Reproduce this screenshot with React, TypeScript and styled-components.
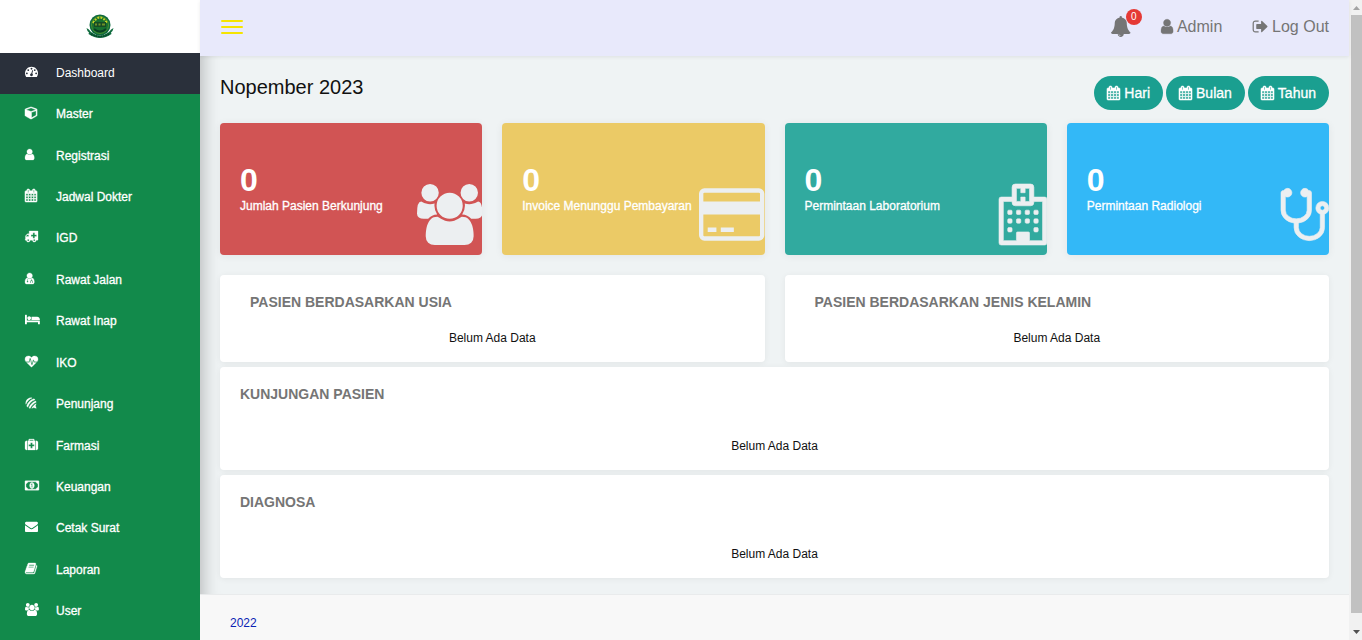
import React from "react";
import styled, { createGlobalStyle } from "styled-components";
import { FaForumbee } from "react-icons/fa";

const GlobalStyle = createGlobalStyle`
  * { box-sizing: border-box; }
  html, body { margin: 0; padding: 0; }
  body {
    font-family: "Liberation Sans", Arial, sans-serif;
    font-size: 12px;
    color: #111;
    overflow: hidden;
  }
  a { color: inherit; text-decoration: none; }
  ul { list-style: none; margin: 0; padding: 0; }
  h1, h2, p { margin: 0; }
`;

/* Icon outlines, drawn on a grid 1792 units high; "bold" thickens the strokes. */
const glyphs = {
  dashboard: {
    w: 1792,
    d: "M384 1152q0-53-37.5-90.5t-90.5-37.5-90.5 37.5-37.5 90.5 37.5 90.5 90.5 37.5 90.5-37.5 37.5-90.5zm192-448q0-53-37.5-90.5t-90.5-37.5-90.5 37.5-37.5 90.5 37.5 90.5 90.5 37.5 90.5-37.5 37.5-90.5zm428 481l101-382q6-26-7.5-48.5t-38.5-29.5-48 6.5-30 39.5l-101 382q-60 5-107 43.5t-63 98.5q-20 77 20 146t117 89 146-20 89-117q16-60-6-117t-72-91zm660-33q0-53-37.5-90.5t-90.5-37.5-90.5 37.5-37.5 90.5 37.5 90.5 90.5 37.5 90.5-37.5 37.5-90.5zm-640-640q0-53-37.5-90.5t-90.5-37.5-90.5 37.5-37.5 90.5 37.5 90.5 90.5 37.5 90.5-37.5 37.5-90.5zm448 192q0-53-37.5-90.5t-90.5-37.5-90.5 37.5-37.5 90.5 37.5 90.5 90.5 37.5 90.5-37.5 37.5-90.5zm320 448q0 261-141 483-19 29-54 29h-1402q-35 0-54-29-141-221-141-483 0-182 71-348t191-286 286-191 348-71 348 71 286 191 191 286 71 348z",
  },
  cube: {
    w: 1664,
    bold: 60,
    d: "M896 1629l640-349v-636l-640 233v752zm-64-865l698-254-698-254-698 254zm832-252v768q0 35-18 65t-49 47l-704 384q-28 16-61 16t-61-16l-704-384q-31-17-49-47t-18-65v-768q0-40 23-73t61-47l704-256q22-8 44-8t44 8l704 256q38 14 61 47t23 73z",
  },
  user: {
    w: 1280,
    x: 256,
    bold: 30,
    d: "M1536 1399q0 109-62.5 187t-150.5 78h-854q-88 0-150.5-78t-62.5-187q0-85 8.5-160.5t31.5-152 58.5-131 94-89 134.5-34.5q131 128 313 128t313-128q76 0 134.5 34.5t94 89 58.5 131 31.5 152 8.5 160.5zm-256-887q0 159-112.5 271.5t-271.5 112.5-271.5-112.5-112.5-271.5 112.5-271.5 271.5-112.5 271.5 112.5 112.5 271.5z",
  },
  doctor: {
    w: 1280,
    x: 256,
    bold: 40,
    d: "M1536 1399q0 109-62.5 187t-150.5 78h-854q-88 0-150.5-78t-62.5-187q0-85 8.5-160.5t31.5-152 58.5-131 94-89 134.5-34.5q131 128 313 128t313-128q76 0 134.5 34.5t94 89 58.5 131 31.5 152 8.5 160.5zM1280 512q0 159-112.5 271.5t-271.5 112.5-271.5-112.5-112.5-271.5 112.5-271.5 271.5-112.5 271.5 112.5 112.5 271.5zM560 1000h90v230a105 105 0 1 1-90 0zM1120 1000h90v150q140 40 140 180v200h-100v-200q0-90-90-90t-90 90v200h-100v-200q0-140 130-180z",
  },
  calendar: {
    w: 1664,
    x: 64,
    bold: 70,
    d: "M192 1664h288v-288h-288v288zm352 0h320v-288h-320v288zm-352-352h288v-320h-288v320zm352 0h320v-320h-320v320zm-352-384h288v-288h-288v288zm736 736h320v-288h-320v288zm-384-736h320v-288h-320v288zm768 736h288v-288h-288v288zm-384-352h320v-320h-320v320zm-352-864v-288q0-13-9.5-22.5t-22.5-9.5h-64q-13 0-22.5 9.5t-9.5 22.5v288q0 13 9.5 22.5t22.5 9.5h64q13 0 22.5-9.5t9.5-22.5zm736 864h288v-320h-288v320zm-384-384h320v-288h-320v288zm384 0h288v-288h-288v288zm32-480v-288q0-13-9.5-22.5t-22.5-9.5h-64q-13 0-22.5 9.5t-9.5 22.5v288q0 13 9.5 22.5t22.5 9.5h64q13 0 22.5-9.5t9.5-22.5zm384-64v1280q0 52-38 90t-90 38h-1408q-52 0-90-38t-38-90v-1280q0-52 38-90t90-38h128v-96q0-66 47-113t113-47h64q66 0 113 47t47 113v96h384v-96q0-66 47-113t113-47h64q66 0 113 47t47 113v96h128q52 0 90 38t38 90z",
  },
  ambulance: {
    w: 1792,
    x: 128,
    bold: 40,
    d: "M704 1408q0-52-38-90t-90-38-90 38-38 90 38 90 90 38 90-38 38-90zm-448-512h384v-256h-158q-14 2-22 9l-195 195q-7 12-9 22v30zm1280 512q0-52-38-90t-90-38-90 38-38 90 38 90 90 38 90-38 38-90zM1728 864v-192q0-14-9-23t-23-9h-224v-224q0-14-9-23t-23-9h-192q-14 0-23 9t-9 23v224h-224q-14 0-23 9t-9 23v192q0 14 9 23t23 9h224v224q0 14 9 23t23 9h192q14 0 23-9t9-23v-224h224q14 0 23-9t9-23zM1920 192v1152q0 26-19 45t-45 19h-192q0 106-75 181t-181 75-181-75-75-181h-320q0 106-75 181t-181 75-181-75-75-181h-128q-26 0-45-19t-19-45 19-45 45-19v-416q0-26 13-58t32-51l198-198q19-19 51-32t58-13h160v-320q0-26 19-45t45-19h1088q26 0 45 19t19 45z",
  },
  bed: {
    w: 2048,
    d: "M256 1024h1728q26 0 45 19t19 45v448h-256v-256h-1536v256h-256v-1216q0-26 19-45t45-19h128q26 0 45 19t19 45v704zm576-320q0-106-75-181t-181-75-181 75-75 181 75 181 181 75 181-75 75-181zm1216 256v-64q0-159-112.5-271.5t-271.5-112.5h-704q-26 0-45 19t-19 45v384h1152z",
  },
  heartbeat: {
    w: 1792,
    bold: 40,
    d: "M1280 1024h305q-5 6-10 10.5t-9 7.5l-3 4-623 600q-18 18-44 18t-44-18l-624-602q-5-2-21-20h369q22 0 39.5-13.5t22.5-34.5l70-281 190 667q6 20 23 33t39 13q21 0 38-13t23-33l146-485 56 112q18 35 57 35zm512-428q0 145-103 300h-369l-111-221q-8-17-25.5-27t-36.5-8q-45 5-56 46l-129 430-196-686q-6-20-23.5-33t-39.5-13-39 13.5-22 34.5l-116 464h-423q-103-155-103-300 0-220 127-344t351-124q62 0 126.5 21.5t120 58 95.5 68.5 76 68q36-36 76-68t95.5-68.5 120-58 126.5-21.5q224 0 351 124t127 344z",
  },
  medkit: {
    w: 1792,
    bold: 30,
    d: "M1280 1120v-192q0-14-9-23t-23-9h-224v-224q0-14-9-23t-23-9h-192q-14 0-23 9t-9 23v224h-224q-14 0-23 9t-9 23v192q0 14 9 23t23 9h224v224q0 14 9 23t23 9h192q14 0 23-9t9-23v-224h224q14 0 23-9t9-23zM640 384h512v-128h-512v128zm-352 0v1280h-64q-92 0-158-66t-66-158v-832q0-92 66-158t158-66h64zm1120 0v1280h-1024v-1280h128v-160q0-40 28-68t68-28h576q40 0 68 28t28 68v160h128zm384 224v832q0 92-66 158t-158 66h-64v-1280h64q92 0 158 66t66 158z",
  },
  money: {
    w: 1920,
    bold: 50,
    d: "M768 1152h384v-96h-128v-448h-114l-148 137 77 80q42-37 55-57h2v288h-128v96zm512-256q0 70-21 142t-59.5 134-101.5 101-138 39-138-39-101.5-101-59.5-134-21-142 21-142 59.5-134 101.5-101 138-39 138 39 101.5 101 59.5 134 21 142zm512 256v-512q-106 0-181-75t-75-181h-1152q0 106-75 181t-181 75v512q106 0 181 75t75 181h1152q0-106 75-181t181-75zm128-832v1152q0 26-19 45t-45 19h-1792q-26 0-45-19t-19-45v-1152q0-26 19-45t45-19h1792q26 0 45 19t19 45z",
  },
  envelope: {
    w: 1792,
    d: "M1792 710v794q0 66-47 113t-113 47h-1472q-66 0-113-47t-47-113v-794q44 49 101 87 362 246 497 345 57 42 92.5 65.5t94.5 48 110 24.5h2q51 0 110-24.5t94.5-48 92.5-65.5q170-123 498-345 57-39 100-87zm0-294q0 79-49 151t-122 123q-376 261-468 325-10 7-42.5 31t-54 38.5-52 32.5-57.5 27-50 9h-2q-23 0-50-9t-57.5-27-52-32.5-54-38.5-42.5-31q-91-64-262-182.5t-205-142.5q-62-42-117-115.5t-55-136.5q0-78 41.5-130t118.5-52h1472q65 0 112.5 47t47.5 113z",
  },
  book: {
    w: 1664,
    x: 64,
    bold: 40,
    d: "M1703 478q40 57 18 129l-275 906q-19 64-76.5 107.5t-122.5 43.5h-923q-77 0-148.5-53.5t-99.5-131.5q-24-67-2-127 0-4 3-27t4-37q1-8-3-21.5t-3-19.5q2-11 8-21t16.5-23.5 16.5-23.5q23-38 45-91.5t30-91.5q3-10 .5-30t-.5-28q3-11 17-28t17-23q21-36 42-92t25-90q1-9-2.5-32t.5-28q4-13 22-30.5t22-22.5q19-26 42.5-84.5t27.5-96.5q1-8-3-25.5t-2-26.5q2-8 9-18t18-23 17-21q8-12 16.5-30.5t15-35 16-36 19.5-32 26.5-23.5 36-11.5 47.5 5.5l-1 3q38-9 51-9h761q74 0 114 56t18 130l-274 906q-36 119-71.5 153.5t-128.5 34.5h-869q-27 0-38 15-11 16-1 43 24 70 144 70h923q29 0 56-15.5t35-41.5l300-987q7-22 5-57 38 15 59 43zm-1064 2q-4 13 2 22.5t20 9.5h608q13 0 25.5-9.5t16.5-22.5l21-64q4-13-2-22.5t-20-9.5h-608q-13 0-25.5 9.5t-16.5 22.5zm-83 256q-4 13 2 22.5t20 9.5h608q13 0 25.5-9.5t16.5-22.5l21-64q4-13-2-22.5t-20-9.5h-608q-13 0-25.5 9.5t-16.5 22.5z",
  },
  users: {
    w: 1920,
    d: "M593 896q-162 5-265 128h-134q-82 0-138-40.5t-56-118.5q0-353 124-353 6 0 43.5 21t97.5 42.5 119 21.5q67 0 133-23-5 37-5 66 0 139 81 256zm1071 637q0 120-73 189.5t-194 69.5h-874q-121 0-194-69.5t-73-189.5q0-53 3.5-103.5t14-109 26.5-108.5 43-97.5 62-81 85.5-53.5 111.5-20q10 0 43 21.5t73 48 107 48 135 21.5 135-21.5 107-48 73-48 43-21.5q61 0 111.5 20t85.5 53.5 62 81 43 97.5 26.5 108.5 14 109 3.5 103.5zm-1024-1277q0 106-75 181t-181 75-181-75-75-181 75-181 181-75 181 75 75 181zm704 384q0 159-112.5 271.5t-271.5 112.5-271.5-112.5-112.5-271.5 112.5-271.5 271.5-112.5 271.5 112.5 112.5 271.5zm576 225q0 78-56 118.5t-138 40.5h-134q-103-123-265-128 81-117 81-256 0-29-5-66 66 23 133 23 59 0 119-21.5t97.5-42.5 43.5-21q124 0 124 353zm-128-609q0 106-75 181t-181 75-181-75-75-181 75-181 181-75 181 75 75 181z",
  },
  bell: {
    w: 1664,
    x: 64,
    d: "M912 1696q0-16-16-16-59 0-101.5-42.5t-42.5-101.5q0-16-16-16t-16 16q0 73 51.5 124.5t124.5 51.5q16 0 16-16zm816-288q0 52-38 90t-90 38h-448q0 106-75 181t-181 75-181-75-75-181h-448q-52 0-90-38t-38-90q50-42 91-88t85-119.5 74.5-158.5 50-206 19.5-260q0-152 117-282.5t307-158.5q-8-19-8-39 0-40 28-68t68-28 68 28 28 68q0 20-8 39 190 28 307 158.5t117 282.5q0 139 19.5 260t50 206 74.5 158.5 85 119.5 91 88z",
  },
  signOut: {
    w: 1664,
    d: "M704 1440q0 4 1 20t.5 26.5-3 23.5-10 19.5-20.5 6.5h-320q-119 0-203.5-84.5t-84.5-203.5v-704q0-119 84.5-203.5t203.5-84.5h320q13 0 22.5 9.5t9.5 22.5q0 4 1 20t.5 26.5-3 23.5-10 19.5-20.5 6.5h-320q-66 0-113 47t-47 113v704q0 66 47 113t113 47h312l11.5 1 11.5 3 8 5.5 7 9 2 13.5zm928-544q0 26-19 45l-544 544q-19 19-45 19t-45-19-19-45v-288h-448q-26 0-45-19t-19-45v-384q0-26 19-45t45-19h448v-288q0-26 19-45t45-19 45 19l544 544q19 19 19 45z",
  },
  card: {
    w: 1920,
    d: "M1760 128q66 0 113 47t47 113v1216q0 66-47 113t-113 47h-1600q-66 0-113-47t-47-113v-1216q0-66 47-113t113-47h1600zm-1600 128q-13 0-22.5 9.5t-9.5 22.5v224h1664v-224q0-13-9.5-22.5t-22.5-9.5h-1600zm1600 1280q13 0 22.5-9.5t9.5-22.5v-608h-1664v608q0 13 9.5 22.5t22.5 9.5h1600zm-1504-128v-128h256v128h-256zm384 0v-128h384v128h-384z",
  },
  hospital: {
    w: 1408,
    bold: 18,
    d: "M64 384H384V96Q384 0 480 0H928Q1024 0 1024 96V384H1344Q1408 384 1408 448V1728Q1408 1792 1344 1792H64Q0 1792 0 1728V448Q0 384 64 384zM128 512V1664H512V1440Q512 1408 544 1408H864Q896 1408 896 1440V1664H1280V512H1024V544Q1024 640 928 640H480Q384 640 384 544V512zM512 128V512H640V384H768V512H896V128H768V256H640V128zM288 768h64q32 0 32 32v64q0 32-32 32h-64q-32 0-32-32v-64q0-32 32-32zm256 0h64q32 0 32 32v64q0 32-32 32h-64q-32 0-32-32v-64q0-32 32-32zm256 0h64q32 0 32 32v64q0 32-32 32h-64q-32 0-32-32v-64q0-32 32-32zm256 0h64q32 0 32 32v64q0 32-32 32h-64q-32 0-32-32v-64q0-32 32-32zM288 1024h64q32 0 32 32v64q0 32-32 32h-64q-32 0-32-32v-64q0-32 32-32zm256 0h64q32 0 32 32v64q0 32-32 32h-64q-32 0-32-32v-64q0-32 32-32zm256 0h64q32 0 32 32v64q0 32-32 32h-64q-32 0-32-32v-64q0-32 32-32zm256 0h64q32 0 32 32v64q0 32-32 32h-64q-32 0-32-32v-64q0-32 32-32zM288 1280h64q32 0 32 32v64q0 32-32 32h-64q-32 0-32-32v-64q0-32 32-32zm768 0h64q32 0 32 32v64q0 32-32 32h-64q-32 0-32-32v-64q0-32 32-32z",
  },
  stethoscope: {
    w: 1408,
    bold: 18,
    d: "M1280 704q0 26-19 45t-45 19-45-19-19-45 19-45 45-19 45 19 19 45zm128 0q0 62-35.5 111t-92.5 70v395q0 159-131.5 271.5t-316.5 112.5-316.5-112.5-131.5-271.5v-132q-164-20-274-128t-110-252v-512q0-26 19-45t45-19q6 0 16 2 17-30 47-48t65-18q53 0 90.5 37.5t37.5 90.5-37.5 90.5-90.5 37.5q-33 0-64-18v402q0 106 94 181t226 75 226-75 94-181v-402q-31 18-64 18-53 0-90.5-37.5t-37.5-90.5 37.5-90.5 90.5-37.5q35 0 65 18t47 48q10-2 16-2 26 0 45 19t19 45v512q0 144-110 252t-274 128v132q0 106 94 181t226 75 226-75 94-181v-395q-57-21-92.5-70t-35.5-111q0-80 56-136t136-56 136 56 56 136z",
  },
};

type GlyphName = keyof typeof glyphs;

function Glyph({ name, size }: { name: GlyphName; size: number }) {
  const g: { w: number; x?: number; bold?: number; d: string } = glyphs[name];
  return (
    <svg
      height={size}
      width={(size * g.w) / 1792}
      viewBox={`${g.x ?? 0} 0 ${g.w} 1792`}
      fill="currentColor"
      fillRule="evenodd"
      stroke="currentColor"
      strokeWidth={g.bold ?? 0}
      overflow="visible"
      aria-hidden="true"
    >
      <path d={g.d} />
    </svg>
  );
}

const Shell = styled.div`
  display: grid;
  grid-template-columns: 200px minmax(0, 1fr) 13px;
  grid-template-rows: minmax(0, 1fr);
  height: 100vh;
  overflow: hidden;
`;

const Sidebar = styled.aside`
  background: #128a4b;
  color: #fff;
`;

const Brand = styled.a`
  display: flex;
  align-items: center;
  justify-content: center;
  height: 53px;
  background: #fff;
`;

const Menu = styled.ul`
  display: grid;
  grid-auto-rows: 1fr;
  height: 580px;
`;

const MenuLink = styled.a<{ $active?: boolean }>`
  display: grid;
  grid-template-columns: 31px 1fr;
  align-items: center;
  height: 100%;
  padding: 0 25px 2px;
  background: ${(p) => (p.$active ? "#2a303b" : "transparent")};
  -webkit-text-stroke: ${(p) => (p.$active ? "0" : "0.3px currentColor")};
`;

const MenuIcon = styled.span`
  display: flex;
  padding-bottom: 3px;
`;

const Main = styled.div`
  display: flex;
  flex-direction: column;
  background: #eff3f4;
`;

const Topbar = styled.header`
  position: relative;
  display: flex;
  align-items: center;
  justify-content: space-between;
  flex: none;
  height: 56px;
  padding: 0 20px 3px 21px;
  background: #e8e9fb;
  box-shadow: 0 1px 4px rgba(0, 0, 0, 0.08);
  color: #757575;
  font-size: 16px;
`;

const MenuToggle = styled.button`
  display: flex;
  flex-direction: column;
  gap: 4px;
  width: 22px;
  padding: 0;
  border: 0;
  background: none;
`;

const ToggleBar = styled.span`
  height: 2px;
  border-radius: 1px;
  background: #f5e400;
`;

const TopNav = styled.nav`
  display: flex;
  align-items: center;
  gap: 30px;
`;

const TopLink = styled.a`
  display: flex;
  align-items: center;
  gap: 4px;
`;

const BellButton = styled.button`
  position: relative;
  display: flex;
  padding: 0;
  border: 0;
  background: none;
  color: inherit;
`;

const Badge = styled.span`
  position: absolute;
  top: -7px;
  right: -11px;
  width: 16px;
  border-radius: 8px;
  background: #e53935;
  color: #fff;
  font-size: 10px;
  line-height: 16px;
  text-align: center;
`;

const Content = styled.main`
  flex: none;
  padding: 20px 20px 16px;
  box-shadow: inset 20px 0 16px -16px rgba(0, 0, 0, 0.22);
`;

const Heading = styled.div`
  display: flex;
  justify-content: space-between;
  align-items: flex-start;
  height: 47px;
`;

const Title = styled.h1`
  font-size: 20px;
  line-height: 22px;
  font-weight: 400;
`;

const Periods = styled.div`
  display: flex;
  gap: 3px;
`;

const PeriodButton = styled.button`
  display: flex;
  align-items: center;
  gap: 4px;
  height: 34px;
  padding: 0 13px;
  border: 0;
  border-radius: 17px;
  background: #1a9f90;
  color: #fff;
  font: 14px "Liberation Sans", Arial, sans-serif;
  -webkit-text-stroke: 0.3px currentColor;
`;

const Stats = styled.section`
  display: grid;
  grid-template-columns: repeat(4, 1fr);
  gap: 20px;
  margin-bottom: 20px;
`;

const StatCard = styled.article<{ $color: string }>`
  position: relative;
  height: 132px;
  padding: 39px 20px 0;
  border-radius: 4px;
  background: ${(p) => p.$color};
  box-shadow: 0 1px 8px rgba(0, 0, 0, 0.06);
  color: #fff;
  overflow: hidden;
`;

const StatValue = styled.p`
  font-size: 32px;
  line-height: 36px;
  font-weight: 700;
`;

const StatLabel = styled.p`
  line-height: 16px;
  -webkit-text-stroke: 0.3px currentColor;
`;

const StatIcon = styled.span`
  position: absolute;
  right: 0;
  bottom: 10px;
  display: flex;
  color: #eceff1;
`;

const Panels = styled.div`
  display: grid;
  grid-template-columns: 1fr 1fr;
  gap: 5px 20px;
`;

const Panel = styled.section<{ $wide?: boolean }>`
  grid-column: ${(p) => (p.$wide ? "1 / -1" : "auto")};
  height: ${(p) => (p.$wide ? "103px" : "87px")};
  padding: 18px ${(p) => (p.$wide ? "20px" : "30px")} 0;
  border-radius: 4px;
  background: #fff;
  box-shadow: 0 1px 6px rgba(0, 0, 0, 0.06);
`;

const PanelTitle = styled.h2<{ $wide?: boolean }>`
  margin-bottom: ${(p) => (p.$wide ? "34px" : "18px")};
  color: #757575;
  font-size: 14px;
  line-height: 18px;
`;

const Empty = styled.p`
  line-height: 18px;
  text-align: center;
`;

const Footer = styled.footer`
  position: relative;
  flex: 1;
  padding: 20px 30px;
  border-top: 1px solid #e9ebec;
  background: #f8f8f8;
  color: #0a23b4;
  line-height: 16px;
`;

const ScrollTrack = styled.div`
  display: flex;
  flex-direction: column;
  align-items: center;
  padding-left: 2px;
  background: #f1f1f1;
`;

const ScrollArrow = styled.span<{ $down?: boolean }>`
  display: flex;
  flex: none;
  align-items: center;
  justify-content: center;
  height: ${(p) => (p.$down ? "27px" : "15px")};
  padding-top: ${(p) => (p.$down ? "11px" : "0")};
  color: ${(p) => (p.$down ? "#505050" : "#a3a3a3")};
`;

const ScrollThumb = styled.div`
  flex: 1;
  width: 100%;
  background: #c1c1c1;
`;

const menu: { label: string; icon: GlyphName | "bee" }[] = [
  { label: "Dashboard", icon: "dashboard" },
  { label: "Master", icon: "cube" },
  { label: "Registrasi", icon: "user" },
  { label: "Jadwal Dokter", icon: "calendar" },
  { label: "IGD", icon: "ambulance" },
  { label: "Rawat Jalan", icon: "doctor" },
  { label: "Rawat Inap", icon: "bed" },
  { label: "IKO", icon: "heartbeat" },
  { label: "Penunjang", icon: "bee" },
  { label: "Farmasi", icon: "medkit" },
  { label: "Keuangan", icon: "money" },
  { label: "Cetak Surat", icon: "envelope" },
  { label: "Laporan", icon: "book" },
  { label: "User", icon: "users" },
];

const stats: { label: string; color: string; icon: GlyphName }[] = [
  { label: "Jumlah Pasien Berkunjung", color: "#d15454", icon: "users" },
  { label: "Invoice Menunggu Pembayaran", color: "#ebca66", icon: "card" },
  { label: "Permintaan Laboratorium", color: "#31aa9f", icon: "hospital" },
  { label: "Permintaan Radiologi", color: "#33b8f7", icon: "stethoscope" },
];

const panels = [
  { title: "PASIEN BERDASARKAN USIA", wide: false },
  { title: "PASIEN BERDASARKAN JENIS KELAMIN", wide: false },
  { title: "KUNJUNGAN PASIEN", wide: true },
  { title: "DIAGNOSA", wide: true },
];

function Emblem() {
  return (
    <svg width="28" height="25" viewBox="0 0 28 25" aria-hidden="true">
      <path d="M0.5 14 Q3 15 5 18 Q14 25 23 18 Q25 15 27.5 14 Q27 17 25 18.5 L25.5 20 Q14 28 2.5 20 L3 18.5 Q1 17 0.5 14z" fill="#0f6b3e" />
      <circle cx="14" cy="11" r="10.5" fill="#0f6b3e" />
      <circle cx="14" cy="11" r="8.5" fill="#17702f" stroke="#4d8f30" strokeWidth="1" />
      <path d="M7 9 Q14 -2 21 9" fill="none" stroke="#c6d426" strokeWidth="2" strokeDasharray="2 1.2" />
      <path d="M8 8h12v5h-12z" fill="#164c25" />
      <path d="M9 10.5h2M12.5 10.5h2M16 10.5h3" stroke="#6f9128" strokeWidth="2" />
      <path d="M8 15 Q14 20 20 15" fill="none" stroke="#093f25" strokeWidth="2" />
      <path d="M5 20 Q14 25 23 20" fill="none" stroke="#0a4229" strokeWidth="1.5" strokeDasharray="1.5 1" />
    </svg>
  );
}

export default function App() {
  return (
    <>
      <GlobalStyle />
      <Shell>
        <Sidebar>
          <Brand href="#" aria-label="Beranda">
            <Emblem />
          </Brand>
          <Menu>
            {menu.map((m, i) => (
              <li key={m.label}>
                <MenuLink href="#" $active={i === 0}>
                  <MenuIcon>
                    {m.icon === "bee" ? (
                      <FaForumbee size={12} stroke="currentColor" strokeWidth={14} />
                    ) : (
                      <Glyph name={m.icon} size={13} />
                    )}
                  </MenuIcon>
                  {m.label}
                </MenuLink>
              </li>
            ))}
          </Menu>
        </Sidebar>
        <Main>
          <Topbar>
            <MenuToggle aria-label="Menu">
              <ToggleBar />
              <ToggleBar />
              <ToggleBar />
            </MenuToggle>
            <TopNav>
              <BellButton aria-label="Notifikasi">
                <Glyph name="bell" size={21} />
                <Badge>0</Badge>
              </BellButton>
              <TopLink href="#">
                <Glyph name="user" size={17} />
                Admin
              </TopLink>
              <TopLink href="#">
                <Glyph name="signOut" size={17} />
                Log Out
              </TopLink>
            </TopNav>
          </Topbar>
          <Content>
            <Heading>
              <Title>Nopember 2023</Title>
              <Periods>
                {["Hari", "Bulan", "Tahun"].map((p) => (
                  <PeriodButton key={p}>
                    <Glyph name="calendar" size={14} />
                    {p}
                  </PeriodButton>
                ))}
              </Periods>
            </Heading>
            <Stats>
              {stats.map((s) => (
                <StatCard key={s.label} $color={s.color}>
                  <StatValue>0</StatValue>
                  <StatLabel>{s.label}</StatLabel>
                  <StatIcon>
                    <Glyph name={s.icon} size={61} />
                  </StatIcon>
                </StatCard>
              ))}
            </Stats>
            <Panels>
              {panels.map((p) => (
                <Panel key={p.title} $wide={p.wide}>
                  <PanelTitle $wide={p.wide}>{p.title}</PanelTitle>
                  <Empty>Belum Ada Data</Empty>
                </Panel>
              ))}
            </Panels>
          </Content>
          <Footer>
            <a href="#">2022</a>
          </Footer>
        </Main>
        <ScrollTrack aria-hidden="true">
          <ScrollArrow>
            <svg width="7" height="4" viewBox="0 0 7 4">
              <path d="M0 4L3.5 0L7 4z" fill="currentColor" />
            </svg>
          </ScrollArrow>
          <ScrollThumb />
          <ScrollArrow $down>
            <svg width="7" height="4" viewBox="0 0 7 4">
              <path d="M0 0L3.5 4L7 0z" fill="currentColor" />
            </svg>
          </ScrollArrow>
        </ScrollTrack>
      </Shell>
    </>
  );
}
